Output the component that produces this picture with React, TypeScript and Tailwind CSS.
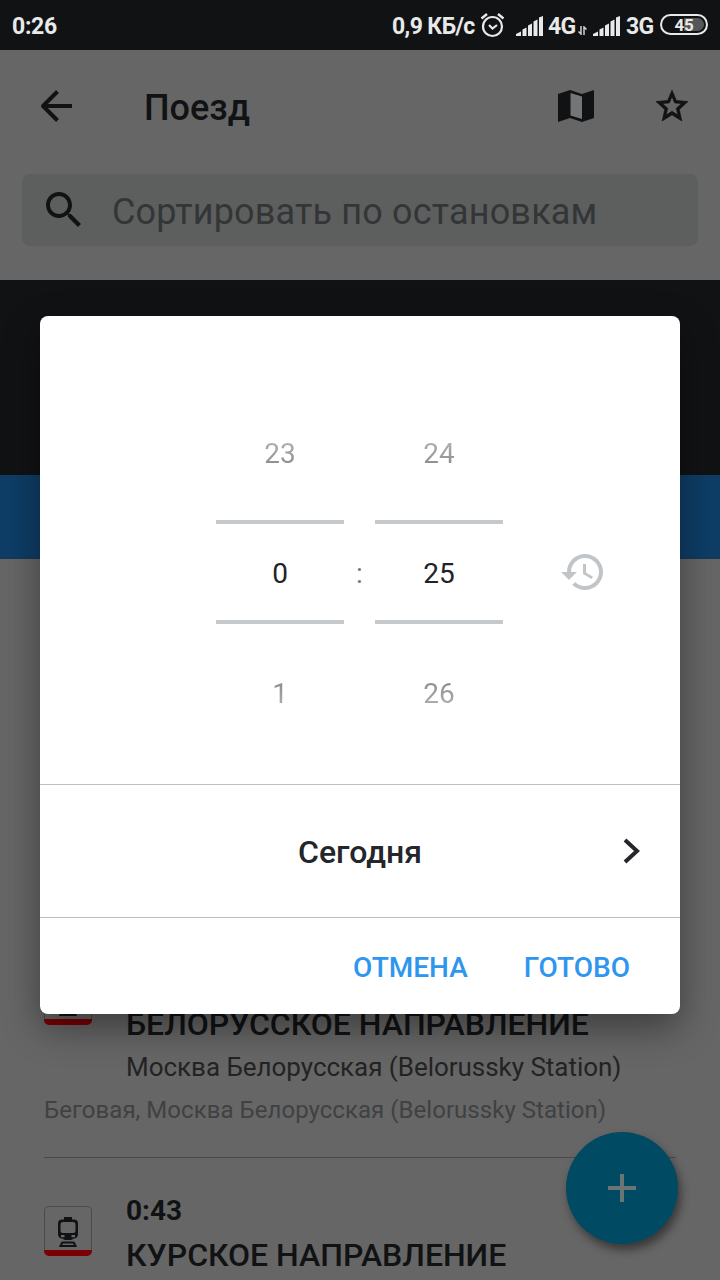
const departures = [
  {
    time: '0:40',
    title: 'БЕЛОРУССКОЕ НАПРАВЛЕНИЕ',
    station: 'Москва Белорусская (Belorussky Station)',
    route: 'Беговая, Москва Белорусская (Belorussky Station)',
  },
  {
    time: '0:43',
    title: 'КУРСКОЕ НАПРАВЛЕНИЕ',
    station: '',
    route: '',
  },
];

const Signal = () => (
  <svg className="shrink-0" width="28" height="22" viewBox="0 0 28 22" fill="#e8e9e9">
    <path d="M0 18l5-2.500V20H0zM6.500 13.500l4-2V20h-4zM12 9.500l4-2V20h-4zM17.500 5.500l4-2V20h-4zM23 1.500l4-1.500V20h-4z" />
  </svg>
);

const StatusBar = () => (
  <div className="flex h-[50px] shrink-0 items-center bg-[#111214] pt-[3px] pl-3 text-[23px] leading-[24px] font-bold text-[#e8e9e9]">
    <span className="w-[380px] shrink-0 tracking-[-0.3px]">0:26</span>
    <span className="w-[88px] shrink-0 tracking-[-0.6px] whitespace-nowrap">0,9 КБ/с</span>
    <svg className="-mt-1 mr-[10px] shrink-0" width="26" height="26" viewBox="0 0 26 26" fill="none" stroke="#e8e9e9">
      <circle cx="12.500" cy="14.500" r="9.500" strokeWidth="2.200" />
      <path d="M1.500 6.500l5.500-4.500M23.500 6.500L18 2" strokeWidth="2.400" />
      <path d="M9 13l3.500 3.500L17 13" strokeWidth="2.200" />
    </svg>
    <Signal />
    <span className="ml-[4px] w-[30px] shrink-0 tracking-[-0.8px]">4G</span>
    <svg className="mt-2 mr-[6px] shrink-0" width="9" height="9" viewBox="0 0 9 9" fill="none" stroke="#d0d1d1" strokeWidth="1.500">
      <path d="M3 0v8L.5 5.500M6 9V1l2.500 2.500" />
    </svg>
    <Signal />
    <span className="ml-[5px] w-[34px] shrink-0 tracking-[-0.6px]">3G</span>
    <div className="-mt-1 flex h-[21px] w-[48px] shrink-0 rounded-full border-2 border-[#e8e9e9] p-[2px]">
      <div className="flex flex-1 items-center justify-center rounded-full bg-linear-to-r from-[#111214] from-50% to-[#555657] to-50% text-[17px] tracking-[-0.3px]">
        45
      </div>
    </div>
  </div>
);

const Header = () => (
  <header className="h-[230px] shrink-0 text-[#111214]">
    <div className="flex h-[112px] items-center pr-[28px] pl-10">
      <svg width="34" height="32" viewBox="0 0 34 32" fill="none" stroke="currentColor" strokeWidth="4" strokeLinejoin="round">
        <path d="M17.500 1.500L3 16l14.500 14.500M3 16h29" />
      </svg>
      <h1 className="ml-[70px] flex-1 pt-1 text-[36px] leading-[40px] font-medium">Поезд</h1>
      <svg width="36" height="32" viewBox="0 0 36 32" fill="currentColor">
        <path d="M0 4l12-4 12 4 12-4v28l-12 4-12-4-12 4z" />
        <path d="M12.500 3L24 6.500v22.500l-11.500-3.500z" fill="#737576" />
      </svg>
      <svg className="ml-[58px]" width="40" height="40" viewBox="0 0 24 24" fill="currentColor" stroke="currentColor" strokeWidth="0.400">
        <path d="M21.600 9.340l-6.990-.62L12 2.500 9.390 8.730 2.400 9.340l5.260 4.730L6.120 21 12 17.270 17.880 21l-1.530-6.930L21.600 9.340zM12 15.200l-3.560 2.170 1-4.080-3.220-2.780 4.180-.38L12 6.300l1.610 3.840 4.180.38-3.220 2.780 1 4.080L12 15.200z" />
      </svg>
    </div>
    <div className="mx-[22px] mt-3 flex h-[72px] items-center rounded-lg bg-[#5c5f5e] pl-[18px]">
      <svg width="48" height="48" viewBox="0 0 24 24" fill="currentColor">
        <path d="M15.500 14h-.79l-.28-.27C15.410 12.590 16 11.110 16 9.500 16 5.910 13.090 3 9.500 3S3 5.910 3 9.500 5.910 16 9.500 16c1.610 0 3.090-.59 4.230-1.570l.27.28v.79l5 4.990L20.490 19l-4.990-5zm-6 0C7.010 14 5 11.990 5 9.500S7.010 5 9.500 5 14 7.010 14 9.500 11.990 14 9.500 14z" />
      </svg>
      <span className="ml-6 pt-1 text-[36px] leading-[40px] tracking-[0.17px] text-[#333536]">Сортировать по остановкам</span>
    </div>
  </header>
);

const TrainBadge = () => (
  <div className="flex h-[50px] w-12 flex-col">
    <div className="flex h-11 justify-center rounded-t-[5px] border border-b-0 border-[#4b4b4b] pt-[10px]">
      <svg width="20" height="30" viewBox="0 0 20 30" fill="#111214">
        <path d="M6 0h8v3H6z" />
        <path d="M4 2.500h12q4 0 4 4V17q0 4-4 4.500L13 23H7l-3-1.500Q0 21 0 17V6.500q0-4 4-4zM5 5Q2.500 5 2.500 7.500v6Q2.500 16 5 16h10q2.500 0 2.500-2.500v-6Q17.500 5 15 5z" fillRule="evenodd" />
        <path d="M3 18h3.500v2.200H3zM13.500 18H17v2.200h-3.500z" fill="#666" />
        <path d="M4.500 25.500h11M4.500 25L2.500 29h15l-2-4" fill="none" stroke="#111214" strokeWidth="2" />
      </svg>
    </div>
    <div className="h-1.5 rounded-b-[5px] bg-[#7a0004]" />
  </div>
);

const Departures = () => (
  <div className="flex-1 overflow-hidden pt-[368px]">
    {departures.map((item) => (
      <div key={item.time} className="mx-11 h-[231px] border-b border-[#4a4a4a]">
        <div className="flex pt-[33px]">
          <div className="pt-[15px]">
            <TrainBadge />
          </div>
          <div className="ml-[34px] whitespace-nowrap">
            <div className="h-[40px] text-[28px] leading-[40px] font-bold text-[#111214]">{item.time}</div>
            <div className="h-[48px] text-[32px] leading-[48px] font-medium tracking-[-0.03px] text-[#111214]">{item.title}</div>
            <div className="h-[38px] text-[26px] leading-[39px] tracking-[-0.03px] text-[#232324]">{item.station}</div>
          </div>
        </div>
        <div className="pt-[8px] text-[24px] leading-[32px] tracking-[0.04px] whitespace-nowrap text-[#404142]">{item.route}</div>
      </div>
    ))}
  </div>
);

const Wheel = ({ values }: { values: string[] }) => (
  <div className="flex w-32 flex-col text-center text-[28px] text-[#212328]">
    <div className="h-[120px] bg-linear-to-b from-[#b0b0b0] from-40% to-[#8c8c8c] to-60% bg-clip-text leading-[120px] text-transparent">{values[0]}</div>
    <div className="mt-[6px] mb-[10px] h-[104px] border-y-4 border-[#c5c9cb] leading-[100px]">{values[1]}</div>
    <div className="h-[120px] bg-linear-to-b from-[#8c8c8c] from-40% to-[#b0b0b0] to-60% bg-clip-text leading-[120px] text-transparent">{values[2]}</div>
  </div>
);

const TimeDialog = () => (
  <div className="absolute inset-0 flex flex-col items-center pt-[316px]">
    <div className="flex h-[698px] w-[640px] flex-col rounded-lg bg-white shadow-[0_14px_36px_rgba(0,0,0,0.4)]">
      <div className="flex h-[469px] items-center border-b border-[#bdbdbd] pt-[48px] pl-[176px]">
        <Wheel values={['23', '0', '1']} />
        <span className="w-[31px] text-center text-[28px] text-[#757575]">:</span>
        <Wheel values={['24', '25', '26']} />
        <svg className="-mt-1 ml-14" width="48" height="48" viewBox="0 0 24 24" fill="#c1c5c8">
          <path d="M13 3c-4.970 0-9 4.030-9 9H1l3.890 3.890.07.14L9 12H6c0-3.870 3.130-7 7-7s7 3.130 7 7-3.130 7-7 7c-1.930 0-3.680-.79-4.940-2.060l-1.420 1.420C8.270 19.990 10.510 21 13 21c4.970 0 9-4.030 9-9s-4.030-9-9-9zm-1 5v5l4.280 2.540.72-1.210-3.500-2.080V8H12z" />
        </svg>
      </div>
      <button className="relative h-[133px] border-b border-[#bdbdbd] pt-0.5 text-[32px] font-medium text-[#24262b]">
        Сегодня
        <svg className="absolute top-[53px] right-[39px]" width="18" height="26" viewBox="0 0 18 26" fill="none" stroke="currentColor" strokeWidth="4">
          <path d="M2 2l12 11L2 24" />
        </svg>
      </button>
      <div className="flex flex-1 items-center justify-end gap-14 pt-[3px] pr-[50px] text-[28px] font-medium text-[#2e96ee]">
        <button>ОТМЕНА</button>
        <button>ГОТОВО</button>
      </div>
    </div>
  </div>
);

const App = () => {
  return (
    <div className="relative flex h-[1280px] w-[720px] flex-col overflow-hidden bg-[#666] font-['Roboto',sans-serif]">
      <StatusBar />
      <Header />
      <div className="h-[195px] shrink-0 bg-[#111214]" />
      <div className="h-[84px] shrink-0 border-b-2 border-[#16395a] bg-[#0e3d66]" />
      <Departures />

      {/* Add button */}
      <button className="absolute right-[42px] bottom-9 flex h-28 w-28 items-center justify-center rounded-full bg-[#004a63] shadow-[3px_6px_10px_rgba(0,0,0,0.45)]">
        <svg width="28" height="28" viewBox="0 0 28 28" stroke="#6b7574" strokeWidth="4">
          <path d="M14 0v28M0 14h28" />
        </svg>
      </button>

      <TimeDialog />
    </div>
  );
};

export default App;
